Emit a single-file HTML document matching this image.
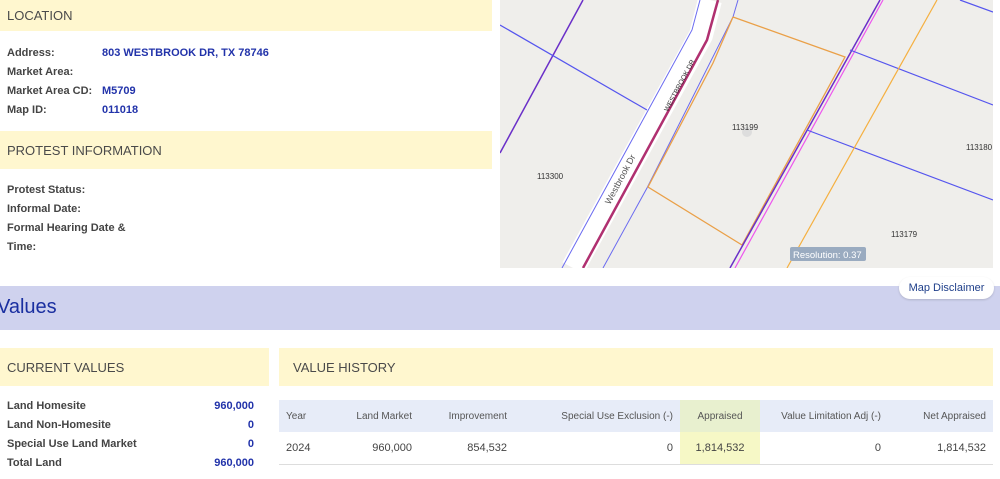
<!DOCTYPE html>
<html><head><style>
*{margin:0;padding:0;box-sizing:border-box}
body{width:1000px;height:479px;overflow:hidden;background:#fff;font-family:"Liberation Sans",Arial,sans-serif;position:relative;color:#444}
.hd{position:absolute;background:#fff7cf;font-size:13px;color:#4a4a4a;padding-left:7px;display:flex;align-items:center}
.lb{position:absolute;font-size:11px;font-weight:bold;color:#444}
.v{position:absolute;font-size:11px;font-weight:bold;color:#2233aa}
table{position:absolute;left:279px;top:400px;width:714px;border-collapse:collapse;font-size:10px;color:#444;font-family:"Liberation Sans Narrow","Liberation Sans",sans-serif}
th{background:#e7ecf8;font-weight:normal;height:32px;text-align:right;padding:0 7px;color:#555}
td{height:32px;text-align:right;padding:0 7px;font-size:11px;border-bottom:1px solid #ddd}
.ap{background:#f6f8c6 !important}
</style></head><body>
<div class="hd" style="left:0;top:0;width:492px;height:31px">LOCATION</div>
<div class="lb" style="left:7px;top:47px">Address:</div><div class="v" style="left:102px;top:47px">803 WESTBROOK DR, TX 78746</div>
<div class="lb" style="left:7px;top:66px">Market Area:</div>
<div class="lb" style="left:7px;top:85px">Market Area CD:</div><div class="v" style="left:102px;top:85px">M5709</div>
<div class="lb" style="left:7px;top:104px">Map ID:</div><div class="v" style="left:102px;top:104px">011018</div>
<div class="hd" style="left:0;top:131px;width:492px;height:38px">PROTEST INFORMATION</div>
<div class="lb" style="left:7px;top:184px">Protest Status:</div>
<div class="lb" style="left:7px;top:203px">Informal Date:</div>
<div class="lb" style="left:7px;top:222px">Formal Hearing Date &amp;</div>
<div class="lb" style="left:7px;top:241px">Time:</div>

<svg style="position:absolute;left:500px;top:0" width="493" height="268" viewBox="0 0 493 268">
<rect width="493" height="268" fill="#efeeeb"/>
<polyline points="210,0 201,35 73,268" stroke="#fff" stroke-width="24" fill="none"/>
<polyline points="200,0 192,30 62,268" stroke="#6a6af0" stroke-width="1" fill="none"/>
<polyline points="218,0 207,40 83,268" stroke="#b03070" stroke-width="2.5" fill="none"/>
<polyline points="238,0 233,17 147,188 103,268" stroke="#6a6af0" stroke-width="1" fill="none"/>
<line x1="83" y1="0" x2="0" y2="153" stroke="#6a2fc8" stroke-width="1.5"/>
<line x1="0" y1="25" x2="147" y2="110" stroke="#5555ee" stroke-width="1.2"/>
<polyline points="233,17 345,57 242,245 148,187 213,63 233,17" stroke="#eaa048" stroke-width="1.3" fill="none"/>
<line x1="380" y1="0" x2="230" y2="268" stroke="#6a2fc8" stroke-width="1.5"/>
<line x1="383" y1="0" x2="235" y2="268" stroke="#ee55ee" stroke-width="1.2"/>
<line x1="350" y1="50" x2="493" y2="105" stroke="#5555ee" stroke-width="1.2"/>
<line x1="307" y1="130" x2="493" y2="200" stroke="#5555ee" stroke-width="1.2"/>
<line x1="437" y1="0" x2="287" y2="268" stroke="#f5b040" stroke-width="1.2"/>
<line x1="460" y1="0" x2="493" y2="12" stroke="#5555ee" stroke-width="1.2"/>
<circle cx="247" cy="132" r="5" fill="#ddd"/>
<g font-size="8" fill="#333" font-family="Liberation Sans">
<text x="232" y="130">113199</text><text x="37" y="179">113300</text><text x="466" y="150">113180</text><text x="391" y="237">113179</text>
<text transform="translate(168,112) rotate(-62)" font-size="7">WESTBROOK DR</text>
<text transform="translate(110,205) rotate(-62)" font-size="9" fill="#555">Westbrook Dr</text>
</g>
<rect x="290" y="247" width="76" height="14" rx="2" fill="#9aabc0"/>
<text x="293" y="258" font-size="9.5" fill="#fff" font-family="Liberation Sans">Resolution: 0.37</text>
</svg>

<div style="position:absolute;left:0;top:286px;width:1000px;height:44px;background:#cfd2ee"></div>
<div style="position:absolute;left:-3px;top:296px;font-size:20px;color:#1a2fa0">Values</div>
<div style="position:absolute;left:899px;top:277px;width:95px;height:22px;background:#fff;border-radius:11px;box-shadow:0 1px 2px rgba(0,0,0,.15);font-size:11px;color:#1f3f8a;text-align:center;line-height:22px">Map Disclaimer</div>

<div class="hd" style="left:0;top:348px;width:269px;height:38px">CURRENT VALUES</div>
<div class="lb" style="left:7px;top:400px">Land Homesite</div><div class="v" style="right:746px;top:400px">960,000</div>
<div class="lb" style="left:7px;top:419px">Land Non-Homesite</div><div class="v" style="right:746px;top:419px">0</div>
<div class="lb" style="left:7px;top:438px">Special Use Land Market</div><div class="v" style="right:746px;top:438px">0</div>
<div class="lb" style="left:7px;top:457px">Total Land</div><div class="v" style="right:746px;top:457px">960,000</div>

<div class="hd" style="left:279px;top:348px;width:714px;height:38px;padding-left:14px">VALUE HISTORY</div>
<table>
<tr><th style="text-align:left;width:50px">Year</th><th style="width:90px">Land Market</th><th style="width:95px">Improvement</th><th style="width:166px">Special Use Exclusion (-)</th><th class="ap" style="width:80px;text-align:center;background:#e8f0cf !important">Appraised</th><th style="width:128px">Value Limitation Adj (-)</th><th>Net Appraised</th></tr>
<tr><td style="text-align:left">2024</td><td>960,000</td><td>854,532</td><td>0</td><td class="ap" style="text-align:center">1,814,532</td><td>0</td><td>1,814,532</td></tr>
</table>
</body></html>
